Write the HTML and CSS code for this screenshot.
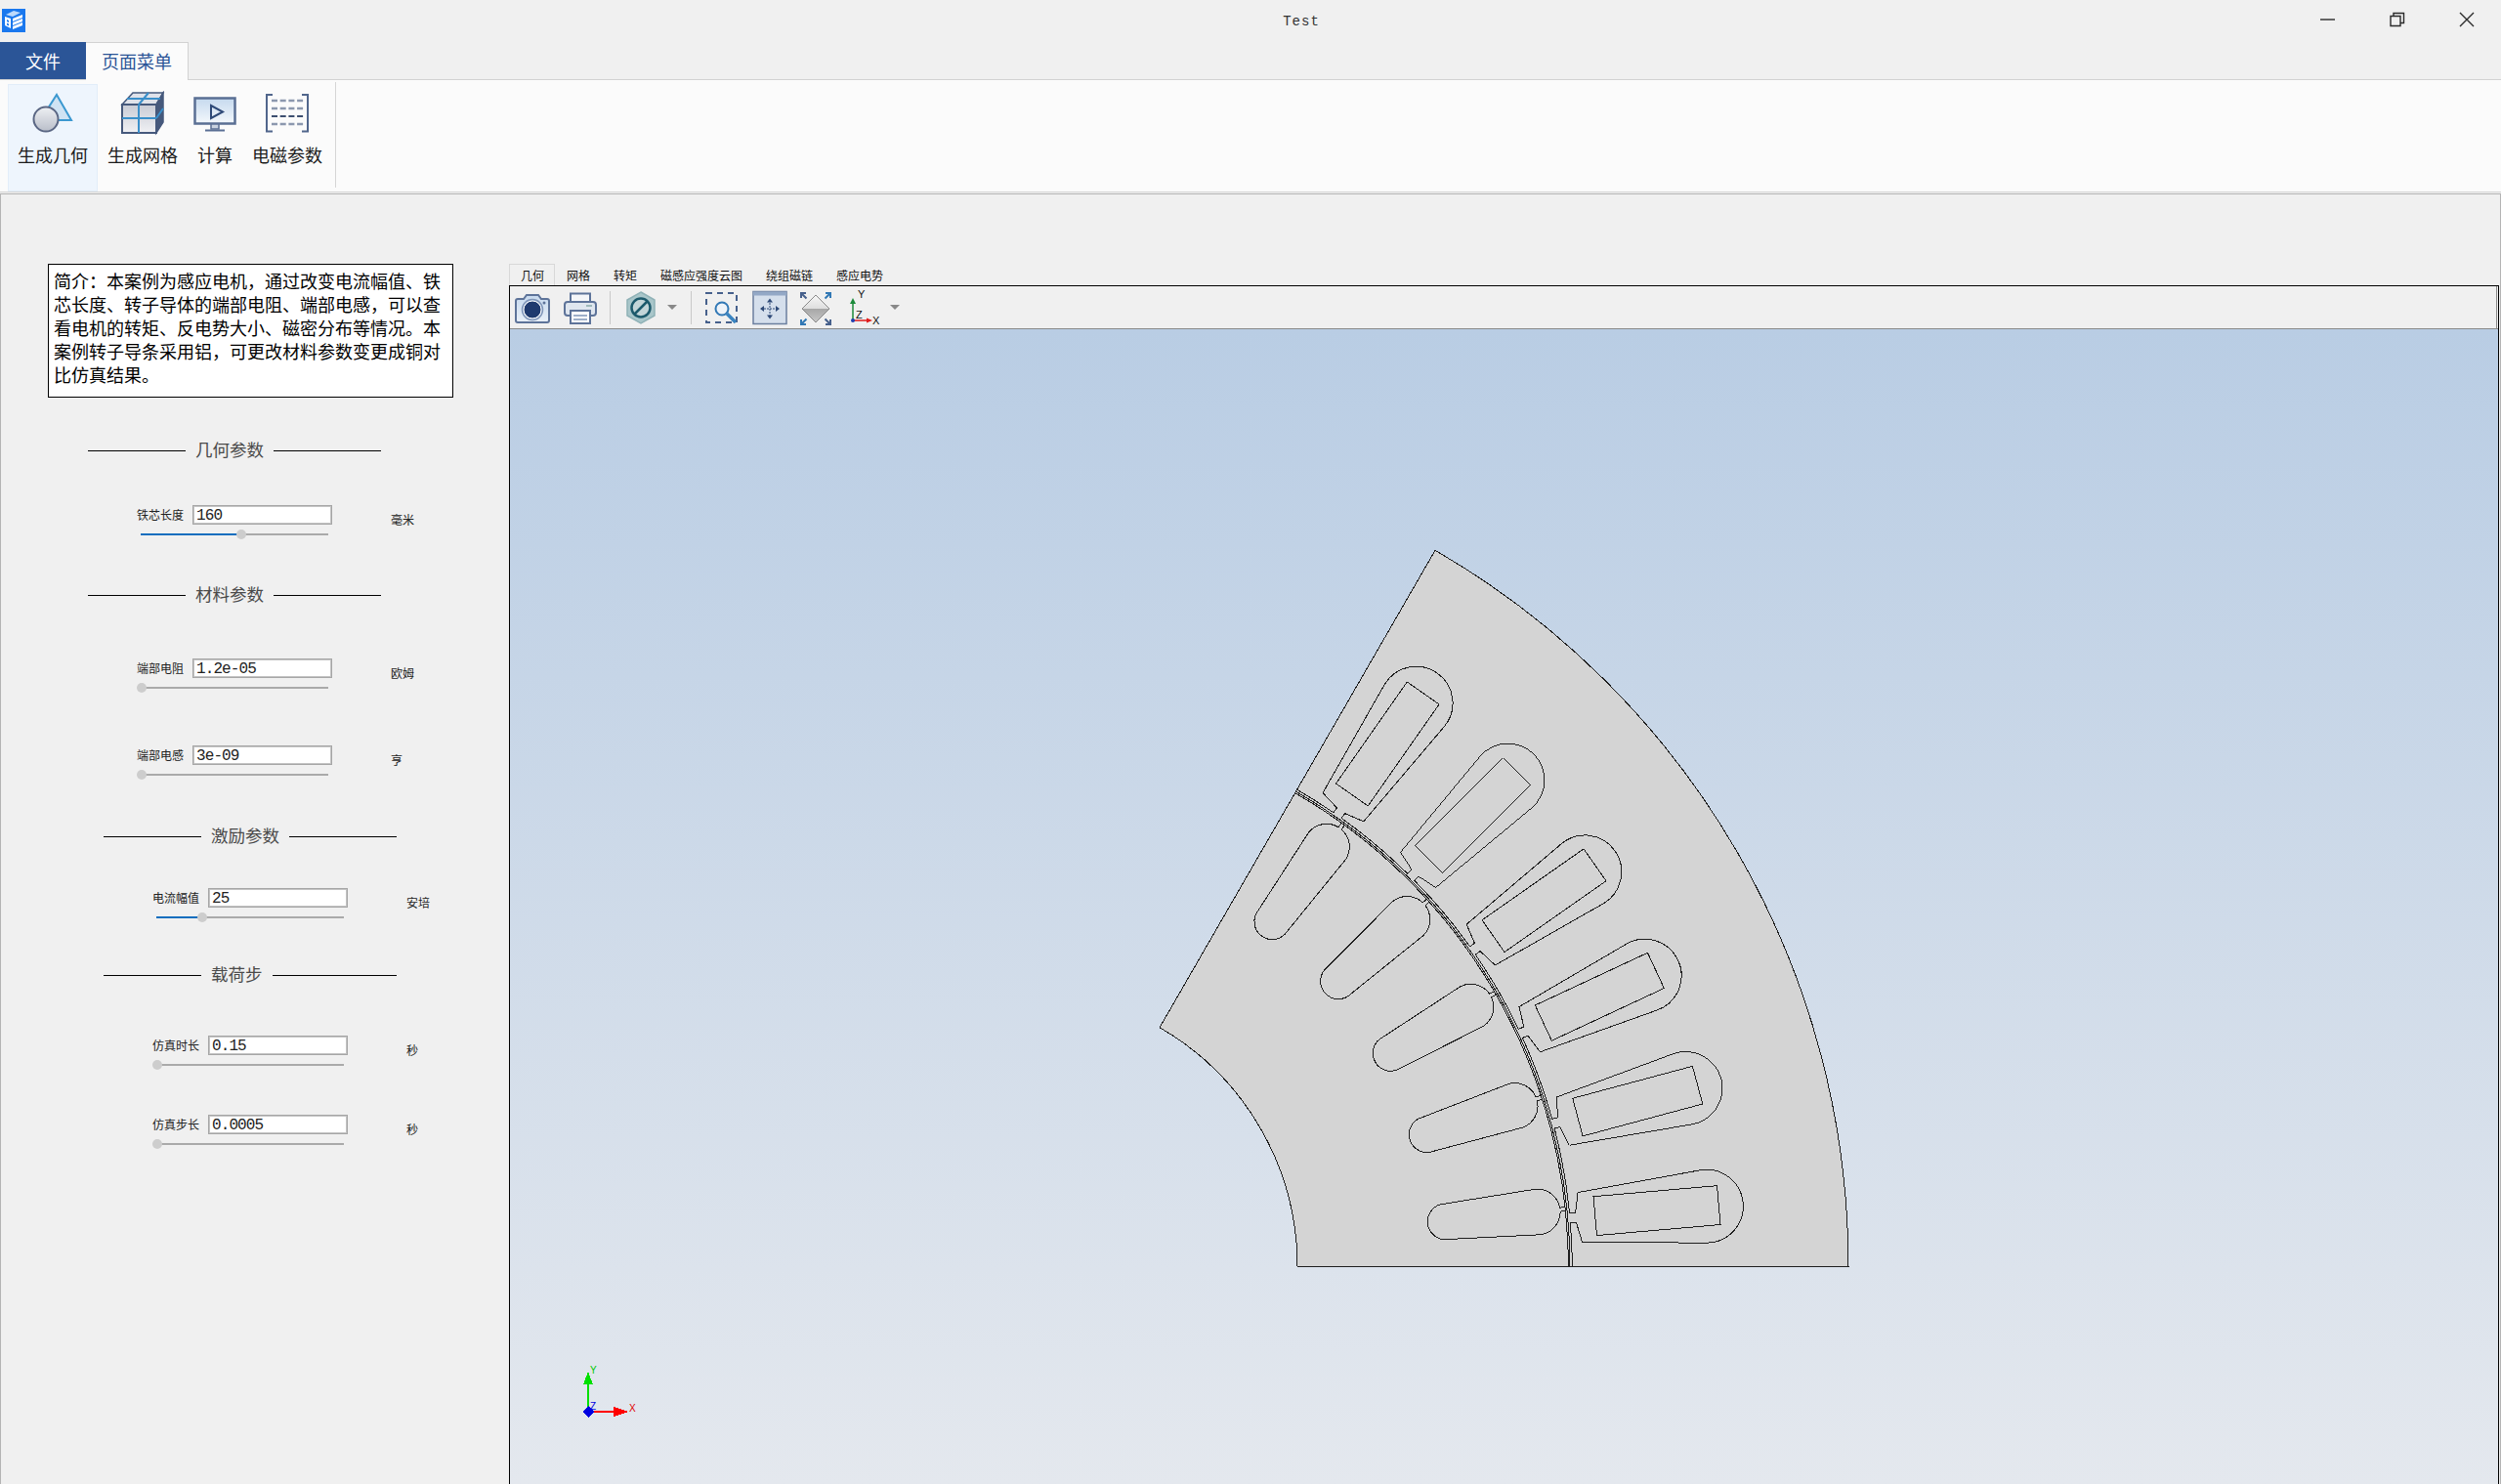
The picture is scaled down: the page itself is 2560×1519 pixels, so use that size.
FILE: index.html
```html
<!DOCTYPE html>
<html lang="zh-CN">
<head>
<meta charset="utf-8">
<title>Test</title>
<link rel="stylesheet" href="styles.css">
</head>
<body>
<header class="titlebar">
  <div class="title-left">
    <svg class="app-icon" viewBox="0 0 24 24" width="24" height="24">
      <rect width="24" height="24" fill="#1a78ee"/>
      <path d="M4 6 12 2 19 4 11 8Z" fill="#bcd9fb"/>
      <path d="M3 8 9 10V20L3 17Z" fill="#fff"/>
      <path d="M5 11 7 12V14L5 13ZM5 14.5 7 15.5V17.500L5 16.500Z" fill="#1a78ee"/>
      <path d="M11 10 21 6V9L11 13ZM11 14 21 10V13L11 17ZM11 18 21 14V17L11 21Z" fill="#fff"/>
    </svg>
  </div>
  <div class="app-title">Test</div>
  <div class="win-controls">
    <button class="win-btn"><svg viewBox="0 0 16 16" width="16" height="16"><path d="M0 8H15" class="win-stroke"/></svg></button>
    <button class="win-btn"><svg viewBox="0 0 16 16" width="16" height="16"><path d="M1 4.500H11V14.500H1ZM4 4.500V1.500H14.500V11.500H11" class="win-stroke"/></svg></button>
    <button class="win-btn"><svg viewBox="0 0 16 16" width="16" height="16"><path d="M1 1 15 15M15 1 1 15" class="win-stroke"/></svg></button>
  </div>
</header>

<nav class="menu-tabs">
  <div class="file-tab">文件</div>
  <div class="page-tab">页面菜单</div>
</nav>

<section class="ribbon">
  <div class="rib-btn active">
    <svg class="rib-icon" viewBox="0 0 48 48" width="48" height="48">
      <defs>
        <linearGradient id="gc" x1="0" y1="0" x2="0" y2="1"><stop offset="0" stop-color="#eef0f3"/><stop offset="1" stop-color="#b9bec9"/></linearGradient>
        <linearGradient id="gb" x1="0" y1="0" x2="0" y2="1"><stop offset="0" stop-color="#c5d9ee"/><stop offset="1" stop-color="#f4f8fc"/></linearGradient>
        <linearGradient id="gf" x1="0" y1="0" x2="0" y2="1"><stop offset="0" stop-color="#c8cbd5"/><stop offset="1" stop-color="#f0f1f4"/></linearGradient>
      </defs>
      <path d="M28 4 43 30H20L19 18Z" fill="#cfe3f3" stroke="#3b98d0" stroke-width="2"/>
      <circle cx="17" cy="29" r="12.500" fill="url(#gc)" stroke="#5b6784" stroke-width="2"/>
    </svg>
    <span class="rib-label">生成几何</span>
  </div>
  <div class="rib-btn">
    <svg class="rib-icon" viewBox="0 0 48 48" width="48" height="48">
      <path d="M3 14 14 2H45L38 14Z" fill="#dfe2ea" stroke="#46597c" stroke-width="1.500"/>
      <path d="M38 14 45 2V32L38 43Z" fill="#46597c" stroke="#46597c" stroke-width="1.500"/>
      <rect x="3" y="14" width="35" height="29" fill="url(#gf)" stroke="#46597c" stroke-width="2"/>
      <path d="M20 14V43M3 28H38M20 14 30 2M8 8H42M38 28 45 18" fill="none" stroke="#3a8fca" stroke-width="2"/>
    </svg>
    <span class="rib-label">生成网格</span>
  </div>
  <div class="rib-btn">
    <svg class="rib-icon" viewBox="0 0 48 48" width="48" height="48">
      <rect x="3.500" y="7.500" width="41" height="26" fill="url(#gb)" stroke="#5a6f94" stroke-width="2.500"/>
      <path d="M20 15V28L32 21.500Z" fill="none" stroke="#2f4a78" stroke-width="2"/>
      <path d="M20 34H28V39H20Z" fill="#c9d2e0" stroke="#5a6f94" stroke-width="1.500"/>
      <path d="M14 40.500H34" stroke="#5a6f94" stroke-width="2"/>
    </svg>
    <span class="rib-label">计算</span>
  </div>
  <div class="rib-btn">
    <svg class="rib-icon" viewBox="0 0 48 48" width="48" height="48">
      <path d="M9 4H3V41.500H9M39 4H45V41.500H39" fill="none" stroke="#51668c" stroke-width="2"/>
      <path d="M8 10H42M8 18H42M8 34H42" fill="none" stroke="#8c98ae" stroke-width="2.500" stroke-dasharray="6 2.700"/>
      <path d="M8 26H42" fill="none" stroke="#3d4f70" stroke-width="2" stroke-dasharray="6 2.700"/>
    </svg>
    <span class="rib-label">电磁参数</span>
  </div>
  <div class="rib-sep"></div>
</section>

<main class="workspace">
  <aside class="panel">
    <div class="intro">简介：本案例为感应电机，通过改变电流幅值、铁芯长度、转子导体的端部电阻、端部电感，可以查看电机的转矩、反电势大小、磁密分布等情况。本案例转子导条采用铝，可更改材料参数变更成铜对比仿真结果。</div>

    <div class="sec sec-geo"><i></i><span>几何参数</span><i></i></div>
    <div class="param param-core">
      <label>铁芯长度</label><input value="160" readonly><em>毫米</em>
      <div class="slider" style="--v:53.6%"><b></b><u></u></div>
    </div>

    <div class="sec sec-mat"><i></i><span>材料参数</span><i></i></div>
    <div class="param param-res">
      <label>端部电阻</label><input value="1.2e-05" readonly><em>欧姆</em>
      <div class="slider" style="--v:0.5%"><b></b><u></u></div>
    </div>
    <div class="param param-ind">
      <label>端部电感</label><input value="3e-09" readonly><em>亨</em>
      <div class="slider" style="--v:0.5%"><b></b><u></u></div>
    </div>

    <div class="sec sec-exc shifted"><i></i><span>激励参数</span><i></i></div>
    <div class="param param-cur shifted">
      <label>电流幅值</label><input value="25" readonly><em>安培</em>
      <div class="slider" style="--v:24.5%"><b></b><u></u></div>
    </div>

    <div class="sec sec-load shifted"><i></i><span>载荷步</span><i></i></div>
    <div class="param param-time shifted">
      <label>仿真时长</label><input value="0.15" readonly><em>秒</em>
      <div class="slider" style="--v:0.5%"><b></b><u></u></div>
    </div>
    <div class="param param-step shifted">
      <label>仿真步长</label><input value="0.0005" readonly><em>秒</em>
      <div class="slider" style="--v:0.5%"><b></b><u></u></div>
    </div>
  </aside>

  <section class="viewer">
    <div class="view-tabs">
      <div class="vtab current">几何</div>
      <div class="vtab">网格</div>
      <div class="vtab">转矩</div>
      <div class="vtab">磁感应强度云图</div>
      <div class="vtab">绕组磁链</div>
      <div class="vtab">感应电势</div>
    </div>
    <div class="view-frame">
      <div class="toolbar">
        <svg viewBox="0 0 36 36" width="36" height="36">
          <defs><linearGradient id="cam" x1="0" y1="0" x2="0" y2="1"><stop offset="0" stop-color="#c6d9ee"/><stop offset="1" stop-color="#e9f0f8"/></linearGradient></defs>
          <path d="M3 9H9L12 5H24L27 9H33Q35 9 35 11V31Q35 33 33 33H3Q1 33 1 31V11Q1 9 3 9Z" fill="url(#cam)" stroke="#5d7399" stroke-width="2"/>
          <circle cx="18" cy="20" r="9" fill="#1f3a6e" stroke="#fff" stroke-width="1"/>
          <circle cx="18" cy="20" r="10.500" fill="none" stroke="#7f95b8" stroke-width="1.500"/>
          <circle cx="30" cy="13" r="1.500" fill="#5d7399"/>
        </svg>
        <svg viewBox="0 0 36 36" width="36" height="36">
          <rect x="8" y="3.500" width="20" height="10" fill="#f4f6f9" stroke="#5d7399" stroke-width="2"/>
          <rect x="2" y="12" width="32" height="14" rx="3" fill="#dfe6ef" stroke="#5d7399" stroke-width="2"/>
          <rect x="8" y="21" width="20" height="13" fill="#fff" stroke="#5d7399" stroke-width="2"/>
          <path d="M11 26H25M11 30H25" stroke="#7f95b8" stroke-width="1.500"/>
          <path d="M24 16H30" stroke="#8aa" stroke-width="1.500"/>
        </svg>
        <div class="tool-sep"></div>
        <svg viewBox="0 0 36 36" width="36" height="36">
          <path d="M18 2 32 10V26L18 34 4 26V10Z" fill="#a9c6ca" stroke="#90b2b7" stroke-width="1.500"/>
          <circle cx="18" cy="18" r="9.500" fill="#c3d5d8" stroke="#1d5a6c" stroke-width="2.500"/>
          <path d="M11 25 25 11" stroke="#1d5a6c" stroke-width="2.500"/>
        </svg>
        <div class="caret"></div>
        <div class="tool-sep after-caret"></div>
        <svg class="zoom-tool" viewBox="0 0 36 36" width="36" height="36">
          <rect x="2" y="3" width="31" height="30" fill="none" stroke="#46608c" stroke-width="2" stroke-dasharray="6 5"/>
          <circle cx="18" cy="19" r="6.500" fill="#eef3f9" stroke="#3178b5" stroke-width="2"/>
          <path d="M23 24 32 33" stroke="#3a84c0" stroke-width="3.500"/>
        </svg>
        <svg viewBox="0 0 36 36" width="36" height="36">
          <rect x="1" y="1.500" width="34" height="33" fill="#d5dfec" stroke="#6b7f9f" stroke-width="1.500"/>
          <rect x="1" y="1.500" width="34" height="4" fill="#93a8c6"/>
          <path d="M18 10V28M9 19H27" stroke="#2f4a78" stroke-width="1" stroke-dasharray="2 1"/>
          <path d="M18 8.500 15 12.500H21ZM18 29.500 15 25.500H21ZM8 19 12 16V22ZM28 19 24 16V22Z" fill="#2f4a78"/>
        </svg>
        <svg viewBox="0 0 36 36" width="36" height="36">
          <defs><linearGradient id="dia" x1="0" y1="0" x2="0" y2="1"><stop offset="0" stop-color="#f6f6f6"/><stop offset="0.500" stop-color="#dedede"/><stop offset="0.500" stop-color="#a6a6a6"/><stop offset="1" stop-color="#c8c8c8"/></linearGradient></defs>
          <path d="M17 5 31 19 17 33 3 19Z" fill="url(#dia)" stroke="#8a8a8a" stroke-width="1"/>
          <path d="M7.500 8.500 2.500 3.500M2 8V3H7" fill="none" stroke="#46608c" stroke-width="2"/>
          <path d="M26.500 8.500 31.500 3.500M27 3H32V8" fill="none" stroke="#3178b5" stroke-width="2"/>
          <path d="M7.500 29.500 2.500 34.500M2 30V35H7" fill="none" stroke="#3178b5" stroke-width="2"/>
          <path d="M26.500 29.500 31.500 34.500M27 35H32V30" fill="none" stroke="#46608c" stroke-width="2"/>
        </svg>
        <svg class="axes-icon" viewBox="0 0 36 36" width="36" height="36">
          <path d="M6 31V12" stroke="#1b8a3a" stroke-width="1.500"/>
          <path d="M6 8 3 14H9Z" fill="#1b8a3a"/>
          <path d="M6 31H22" stroke="#e01b1b" stroke-width="1.500"/>
          <path d="M26 31 20 28.500V33.500Z" fill="#e01b1b"/>
          <circle cx="6" cy="31" r="2" fill="#1f3fb0"/>
          <text x="11" y="8" class="axis-mark">Y</text>
          <text x="9" y="29" class="axis-mark">Z</text>
          <text x="26" y="35" class="axis-mark">X</text>
        </svg>
        <div class="caret last"></div>
      </div>
      <div class="canvas">
        <svg class="scene" viewBox="0 0 2036 1182" width="2036" height="1182">
          <defs>
            <path id="stator-slot" d="M562.500 -5L569.200 -5 573.500 -25.500 700.200 -37.350A37.500 37.500 0 1 1 700.200 37.350L573.500 25.500 569.200 5 562.500 5"/>
            <path id="coil" d="M589 -20H716V20H589Z"/>
            <path id="rotor-slot" d="M558.800 -2L553.900 -2A23.500 23.500 0 0 0 531.800 -23.460L437 -18.270A18.300 18.300 0 1 0 437 18.270L531.800 23.460A23.500 23.500 0 0 0 553.900 2L558.800 2"/>
          </defs>
          <g transform="translate(524 959)" class="motor">
            <path class="lamination" d="M282 0H846A846 846 0 0 0 423 -732.660L141 -244.220A282 282 0 0 1 282 0Z"/>
            <path class="gap-line" d="M559.300 0A559.300 559.300 0 0 0 279.650 -484.370"/>
            <path class="gap-line" d="M561 0A561 561 0 0 0 280.500 -485.840"/>
            <path class="gap-line" d="M563.200 0A563.200 563.200 0 0 0 281.600 -487.750"/>
            <g transform="rotate(-5)"><use href="#stator-slot"/><use href="#coil"/></g>
            <g transform="rotate(-15)"><use href="#stator-slot"/><use href="#coil"/></g>
            <g transform="rotate(-25)"><use href="#stator-slot"/><use href="#coil"/></g>
            <g transform="rotate(-35)"><use href="#stator-slot"/><use href="#coil"/></g>
            <g transform="rotate(-45)"><use href="#stator-slot"/><use href="#coil"/></g>
            <g transform="rotate(-55)"><use href="#stator-slot"/><use href="#coil"/></g>
            <use href="#rotor-slot" transform="rotate(-6)"/>
            <use href="#rotor-slot" transform="rotate(-18)"/>
            <use href="#rotor-slot" transform="rotate(-30)"/>
            <use href="#rotor-slot" transform="rotate(-42)"/>
            <use href="#rotor-slot" transform="rotate(-54)"/>
          </g>
          <g class="triad">
            <path d="M80 1108V1080" stroke="#00e000" stroke-width="2.500"/>
            <path d="M80 1067 75 1080H85Z" fill="#00e000"/>
            <path d="M80 1108H108" stroke="#ff0000" stroke-width="2.500"/>
            <path d="M121 1108 106 1103V1113Z" fill="#ff0000"/>
            <path d="M80 1102 86 1108 80 1114 74 1108Z" fill="#0000e0"/>
            <text x="82" y="1069" class="t-y">Y</text>
            <text x="82" y="1106" class="t-z">Z</text>
            <text x="122" y="1108" class="t-x">X</text>
          </g>
        </svg>
      </div>
    </div>
  </section>
</main>
</body>
</html>
```

FILE: styles.css
```css
* { box-sizing: border-box; }

html, body {
  margin: 0;
  height: 1519px;
  overflow: hidden;
}

body {
  display: flex;
  flex-direction: column;
  background: #f0f0f0;
  font-family: "Noto Sans CJK SC", "Liberation Sans", sans-serif;
  color: #111;
}

/* title bar */
.titlebar {
  height: 43px;
  display: grid;
  grid-template-columns: 1fr auto 1fr;
  flex: none;
}
.title-left { padding: 9px 0 0 2px; }
.app-icon { display: block; }
.app-title {
  margin-left: 104px;
  font: 14px/44px "Liberation Mono", monospace;
  letter-spacing: 1px;
  color: #333;
}
.win-controls { display: flex; justify-content: flex-end; }
.win-btn {
  width: 71px;
  height: 40px;
  border: 0;
  padding: 0;
  background: none;
  display: flex;
  align-items: center;
  justify-content: center;
}
.win-stroke { fill: none; stroke: #2a2a2a; stroke-width: 1.400; }

/* menu tabs */
.menu-tabs {
  height: 39px;
  display: flex;
  flex: none;
  border-bottom: 1px solid #d2d2d2;
}
.file-tab {
  width: 88px;
  background: #2b5597;
  color: #fff;
  font-size: 18px;
  line-height: 38px;
  text-align: center;
}
.page-tab {
  width: 105px;
  height: 39px;
  background: #fbfbfb;
  color: #2b5597;
  font-size: 18px;
  line-height: 37px;
  text-align: center;
  border: 1px solid #d2d2d2;
  border-left: 0;
  border-bottom: 0;
}

/* ribbon */
.ribbon {
  height: 115px;
  margin-bottom: 1px;
  flex: none;
  display: flex;
  background: #fbfbfb;
  padding: 4px 0 0 8px;
  border-bottom: 1px solid #d6d6d6;
}
.rib-btn {
  height: 110px;
  padding: 7px 10px 0;
  display: flex;
  flex-direction: column;
  align-items: center;
}
.rib-btn.active { background: #eef5fd; box-shadow: inset 0 0 0 1px #e2edf9; }
.rib-icon { display: block; margin: 0 -6px; }
.rib-label {
  margin-top: 4px;
  font-size: 18px;
  line-height: 26px;
  color: #1c1c1c;
}
.rib-sep {
  width: 1px;
  height: 108px;
  margin: -2px 0 0 3px;
  background: #d6d6d6;
}

/* workspace */
.workspace {
  flex: 1;
  display: flex;
  min-height: 0;
  border: 1px solid #b4b4b4;
  border-bottom: 0;
}

/* left panel */
.panel {
  width: 520px;
  flex: none;
  padding: 71px 0 0 48px;
}
.intro {
  width: 415px;
  height: 137px;
  padding: 4px 0 0 5px;
  border: 1px solid #000;
  background: #fff;
  font-size: 18px;
  line-height: 24px;
  color: #000;
  word-break: break-all;
}
.sec {
  width: 300px;
  height: 24px;
  margin-left: 41px;
  display: flex;
  align-items: center;
  gap: 10px;
  font-size: 17.500px;
  line-height: 24px;
  color: #4a4a4a;
}
.sec span { margin-top: -2px; }
.sec i { display: block; height: 1px; background: #000; }
.sec i:first-child { width: 100px; }
.sec i:last-child { flex: 1; }
.sec.shifted { margin-left: 57px; }

.sec-geo { margin-top: 42px; }
.sec-mat { margin-top: 45px; }
.sec-exc { margin-top: 46px; }
.sec-load { margin-top: 42px; }

.param {
  width: 300px;
  margin-left: 91px;
  display: grid;
  grid-template-columns: 48px 143px auto;
  column-gap: 9px;
  row-gap: 5px;
  align-items: center;
}
.param.shifted { margin-left: 107px; }
.param-core { margin-top: 44px; }
.param-res { margin-top: 53px; }
.param-ind { margin-top: 54px; }
.param-cur { margin-top: 41px; }
.param-time { margin-top: 50px; }
.param-step { margin-top: 46px; }

.param label {
  font-size: 12px;
  line-height: 20px;
  color: #222;
  white-space: nowrap;
}
.param input {
  width: 143px;
  height: 20px;
  padding: 2px 0 0 3px;
  border: 1px solid #a6a6a6;
  outline: 1px solid #c4c4c4;
  outline-offset: -2px;
  background: #fff;
  font: 16px/17px "Liberation Mono", monospace;
  letter-spacing: -0.900px;
  color: #222;
}
.param em {
  margin: 10px 0 0 51px;
  font-style: normal;
  font-size: 12px;
  line-height: 10px;
  color: #222;
  white-space: nowrap;
}
.slider {
  grid-column: 1 / span 2;
  position: relative;
  height: 10px;
  margin: 0 4px;
  background: linear-gradient(#aaa, #aaa) center / 100% 2px no-repeat;
}
.slider b {
  position: absolute;
  left: 0;
  top: 4px;
  height: 2px;
  width: var(--v);
  background: #106ebe;
}
.slider u {
  position: absolute;
  left: var(--v);
  top: 0;
  width: 10px;
  height: 10px;
  margin-left: -5px;
  border-radius: 50%;
  background: #cdcdcd;
}

/* viewer */
.viewer {
  flex: 1;
  min-width: 0;
  padding-top: 71px;
  display: flex;
  flex-direction: column;
}
.view-tabs {
  height: 22px;
  display: flex;
  flex: none;
}
.vtab {
  padding: 0 12px;
  font-size: 12px;
  line-height: 24px;
  color: #111;
  white-space: nowrap;
}
.vtab.current {
  width: 47px;
  padding: 0 11px;
  border: 1px solid #d8d8d8;
  border-bottom: 0;
  line-height: 22px;
}
.view-frame {
  flex: 1;
  min-height: 0;
  margin-right: 1px;
  display: flex;
  flex-direction: column;
  border: 1px solid #000;
  border-bottom: 0;
}
.toolbar {
  height: 43px;
  margin-right: 1px;
  flex: none;
  display: flex;
  align-items: center;
  gap: 12.500px;
  padding-left: 5px;
  background: #f0f0f0;
  border-right: 1px solid #8a8a8a;
}
.toolbar svg { flex: none; overflow: visible; }
.tool-sep { width: 1px; height: 34px; background: #c9c9c9; }
.tool-sep.after-caret { margin-left: 1px; }
.zoom-tool { margin-left: 1px; }
.caret {
  width: 0;
  height: 0;
  margin-left: -3px;
  border-left: 5.500px solid transparent;
  border-right: 5.500px solid transparent;
  border-top: 5px solid #888;
}
.caret.last { margin-left: -4px; }
.axis-mark { font: 11px "Liberation Sans", sans-serif; fill: #111; }

.canvas {
  flex: 1;
  min-height: 0;
  overflow: hidden;
  background: linear-gradient(#b9cde4, #e4e8ee);
  border-top: 1px solid #8a8a8a;
}
.scene { display: block; }

.lamination { fill: #d4d4d4; stroke: #1e1e1e; stroke-width: 1; shape-rendering: crispEdges; }
.gap-line { fill: none; stroke: #1e1e1e; stroke-width: 1; shape-rendering: crispEdges; }
.motor use { fill: #d4d4d4; stroke: #1e1e1e; stroke-width: 1; shape-rendering: crispEdges; }
.triad path { shape-rendering: crispEdges; }
.triad text { font: 10px "Liberation Sans", sans-serif; }
.t-y { fill: #00c800; }
.t-z { fill: #0000e0; }
.t-x { fill: #e00000; }
```
